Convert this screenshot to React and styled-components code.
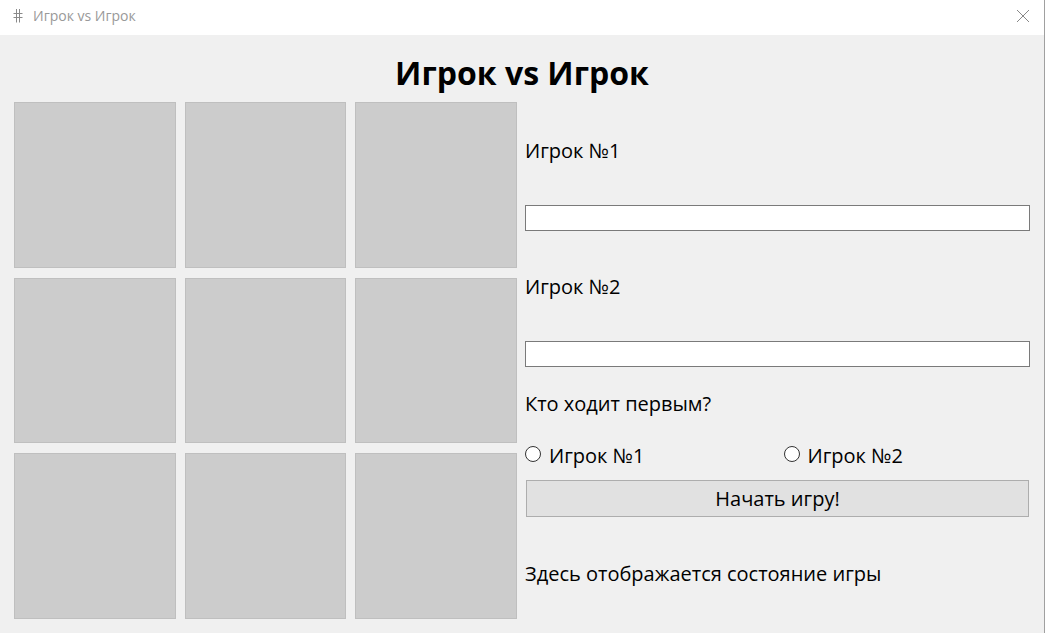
import React from 'react';
import styled, { createGlobalStyle } from 'styled-components';

const GlobalStyle = createGlobalStyle`
  * { box-sizing: border-box; }
  html, body, #root { height: 100%; }
  body {
    margin: 0;
    background: #f0f0f0;
    color: #000;
    font-family: "Open Sans", "Noto Sans", sans-serif;
    font-size: 20px;
    line-height: 28px;
  }
`;

const Window = styled.div`
  display: flex;
  flex-direction: column;
  min-height: 100%;
  background: #f0f0f0;
  border-right: 1px solid #a0a0a0;
`;

const TitleBar = styled.header`
  display: flex;
  align-items: center;
  height: 35px;
  padding: 0 14px 3px 12px;
  background: #fff;
  color: #999;
  font-size: 14px;
  line-height: 20px;
`;

const HashIcon = styled.svg`
  width: 12px;
  height: 14px;
  margin-right: 9px;
`;

const WindowTitle = styled.span`
  flex: 1;
`;

const CloseButton = styled.button`
  display: flex;
  padding: 0;
  border: 0;
  background: none;
`;

const Heading = styled.h1`
  margin: 0;
  padding: 16px 0 7px;
  font-size: 32px;
  font-weight: 700;
  line-height: 44px;
  text-align: center;
`;

const Content = styled.main`
  flex: 1;
  display: grid;
  grid-template-columns: 503fr 505fr;
  gap: 8px;
  padding: 0 14px 14px;
`;

const Board = styled.div`
  display: grid;
  grid-template-columns: repeat(3, 1fr);
  grid-template-rows: repeat(3, 1fr);
  gap: 10px 9px;
`;

const Cell = styled.button`
  padding: 0;
  border: 1px solid #bfbfbf;
  background: #ccc;
`;

const Panel = styled.form`
  display: flex;
  flex-direction: column;
`;

const Field = styled.div`
  display: flex;
  flex-direction: column;
  padding-bottom: 7px;
`;

const FieldLabel = styled.label`
  padding: 35px 0 40px;
`;

const TextInput = styled.input`
  width: 100%;
  height: 26px;
  padding: 0 4px;
  border: 1px solid #7a7a7a;
  background: #fff;
  font: inherit;
`;

const Choice = styled.fieldset`
  display: grid;
  grid-template-columns: 1fr 1fr;
  column-gap: 12px;
  margin: 0;
  padding: 0;
  border: 0;
`;

const Legend = styled.legend`
  padding: 16px 0 24px;
`;

const RadioLabel = styled.label`
  display: flex;
  align-items: center;
  gap: 8px;
`;

const Radio = styled.input`
  appearance: none;
  width: 16px;
  height: 16px;
  margin: 0 0 4px;
  border: 1px solid #333;
  border-radius: 50%;
  background: #fff;
  &:checked { box-shadow: inset 0 0 0 3px #fff; background: #333; }
`;

const StartButton = styled.button`
  height: 37px;
  margin: 10px 1px 0;
  padding: 0;
  border: 1px solid #adadad;
  background: #e1e1e1;
  color: #000;
  font: inherit;
`;

const Status = styled.p`
  margin: 0;
  padding: 43px 0 0;
`;

export default function App() {
  return (
    <>
      <GlobalStyle />
      <Window>
        <TitleBar>
          <HashIcon viewBox="0 0 12 14" fill="none" stroke="#8a8a8a" aria-hidden="true">
            <path d="M4.5 0V13.5M7.5 0V13.5M1.5 4.5H10.5M1.5 8.5H10.5" />
          </HashIcon>
          <WindowTitle>Игрок vs Игрок</WindowTitle>
          <CloseButton type="button" aria-label="Закрыть">
            <svg width="14" height="14" viewBox="0 0 14 14" stroke="#888" aria-hidden="true">
              <path d="M1 1 13 13M13 1 1 13" />
            </svg>
          </CloseButton>
        </TitleBar>
        <Heading>Игрок vs Игрок</Heading>
        <Content>
          <Board>
            {Array.from({ length: 9 }, (_, i) => (
              <Cell key={i} type="button" aria-label={`Клетка ${i + 1}`} />
            ))}
          </Board>
          <Panel onSubmit={(e) => e.preventDefault()}>
            {[1, 2].map((n) => (
              <Field key={n}>
                <FieldLabel htmlFor={`player${n}`}>Игрок №{n}</FieldLabel>
                <TextInput id={`player${n}`} type="text" />
              </Field>
            ))}
            <Choice>
              <Legend>Кто ходит первым?</Legend>
              {[1, 2].map((n) => (
                <RadioLabel key={n}>
                  <Radio type="radio" name="first" value={n} />
                  Игрок №{n}
                </RadioLabel>
              ))}
            </Choice>
            <StartButton type="submit">Начать игру!</StartButton>
            <Status role="status">Здесь отображается состояние игры</Status>
          </Panel>
        </Content>
      </Window>
    </>
  );
}
